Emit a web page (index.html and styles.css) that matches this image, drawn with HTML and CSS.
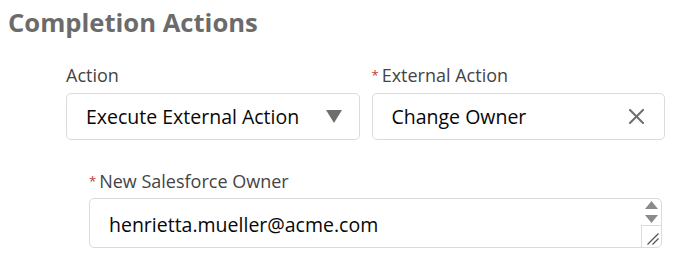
FILE: index.html
```html
<!DOCTYPE html>
<html>
<head>
<meta charset="utf-8">
<link rel="stylesheet" href="styles.css">
</head>
<body>
<div class="page">
  <h2 class="title">Completion Actions</h2>
  <div class="row">
    <div class="field">
      <div class="label">Action</div>
      <div class="box">
        <span class="value">Execute External Action</span>
        <svg class="caret" width="16" height="13" viewBox="0 0 16 13"><path d="M0 0 H16 L8 13 Z" fill="#706e6b"/></svg>
      </div>
    </div>
    <div class="field">
      <div class="label"><span class="req">*</span>External Action</div>
      <div class="box">
        <span class="value">Change Owner</span>
        <svg class="clear" width="15" height="15" viewBox="0 0 15 15"><path d="M1 1 L14 14 M14 1 L1 14" stroke="#706e6b" stroke-width="2" stroke-linecap="square"/></svg>
      </div>
    </div>
  </div>
  <div class="sub">
    <div class="label"><span class="req">*</span>New Salesforce Owner</div>
    <div class="area">
      <span class="value">henrietta.mueller@acme.com</span>
      <div class="scroll">
        <div class="arrows">
          <svg width="13" height="8" viewBox="0 0 13 8"><path d="M6.5 0 L13 8 H0 Z" fill="#8a8a8a"/></svg>
          <svg width="13" height="8" viewBox="0 0 13 8"><path d="M0 0 H13 L6.5 8 Z" fill="#8a8a8a"/></svg>
        </div>
        <div class="grip">
          <svg width="14" height="14" viewBox="0 0 14 14"><path d="M12.5 1.5 L1.5 12.5 M12.5 6.5 L6.5 12.5" stroke="#505050" stroke-width="1.2"/></svg>
        </div>
      </div>
    </div>
  </div>
</div>
</body>
</html>
```

FILE: styles.css
```css
* { box-sizing: border-box; }
html, body { margin: 0; padding: 0; background: #fff; }
body { font-family: "Open Sans", "Noto Sans", sans-serif; width: 680px; height: 258px; overflow: hidden; }
.page { padding: 8px 15px 0 8px; }
.title {
  margin: 0;
  font-size: 25.6px;
  line-height: 30px;
  font-weight: 700;
  color: #6b6b6b;
}
.row {
  display: flex;
  gap: 12px;
  margin: 27px 0 0 58px;
}
.field { flex: 1; }
.label {
  font-size: 18px;
  line-height: 20px;
  color: #444;
  margin-bottom: 8px;
}
.req { color: #c23934; font-size: 13px; margin-right: 3px; vertical-align: 2px; }
.box {
  height: 47px;
  border: 1px solid #dddbda;
  border-radius: 5px;
  display: flex;
  align-items: center;
  padding: 0 20px 0 19px;
}
.value {
  flex: 1;
  font-size: 19.5px;
  color: #080707;
}
.caret { margin-right: -3px; }
.sub { margin: 31px 3px 0 81px; }
.sub .label { margin-bottom: 7px; }
.area {
  height: 50px;
  border: 1px solid #dddbda;
  border-radius: 5px;
  display: flex;
  padding-left: 19px;
}
.area .value { align-self: center; margin-top: 2px; }
.scroll {
  width: 20px;
  display: flex;
  flex-direction: column;
}
.arrows {
  flex: 1;
  display: flex;
  flex-direction: column;
  align-items: center;
  padding-top: 2px;
  gap: 6px;
}
.arrows svg { display: block; }
.grip {
  height: 22px;
  border-left: 1px solid #dddbda;
  border-top: 1px solid #dddbda;
  display: flex;
  align-items: flex-end;
  justify-content: flex-end;
}
.grip svg { display: block; margin: 0 1px 1px 0; }
```
